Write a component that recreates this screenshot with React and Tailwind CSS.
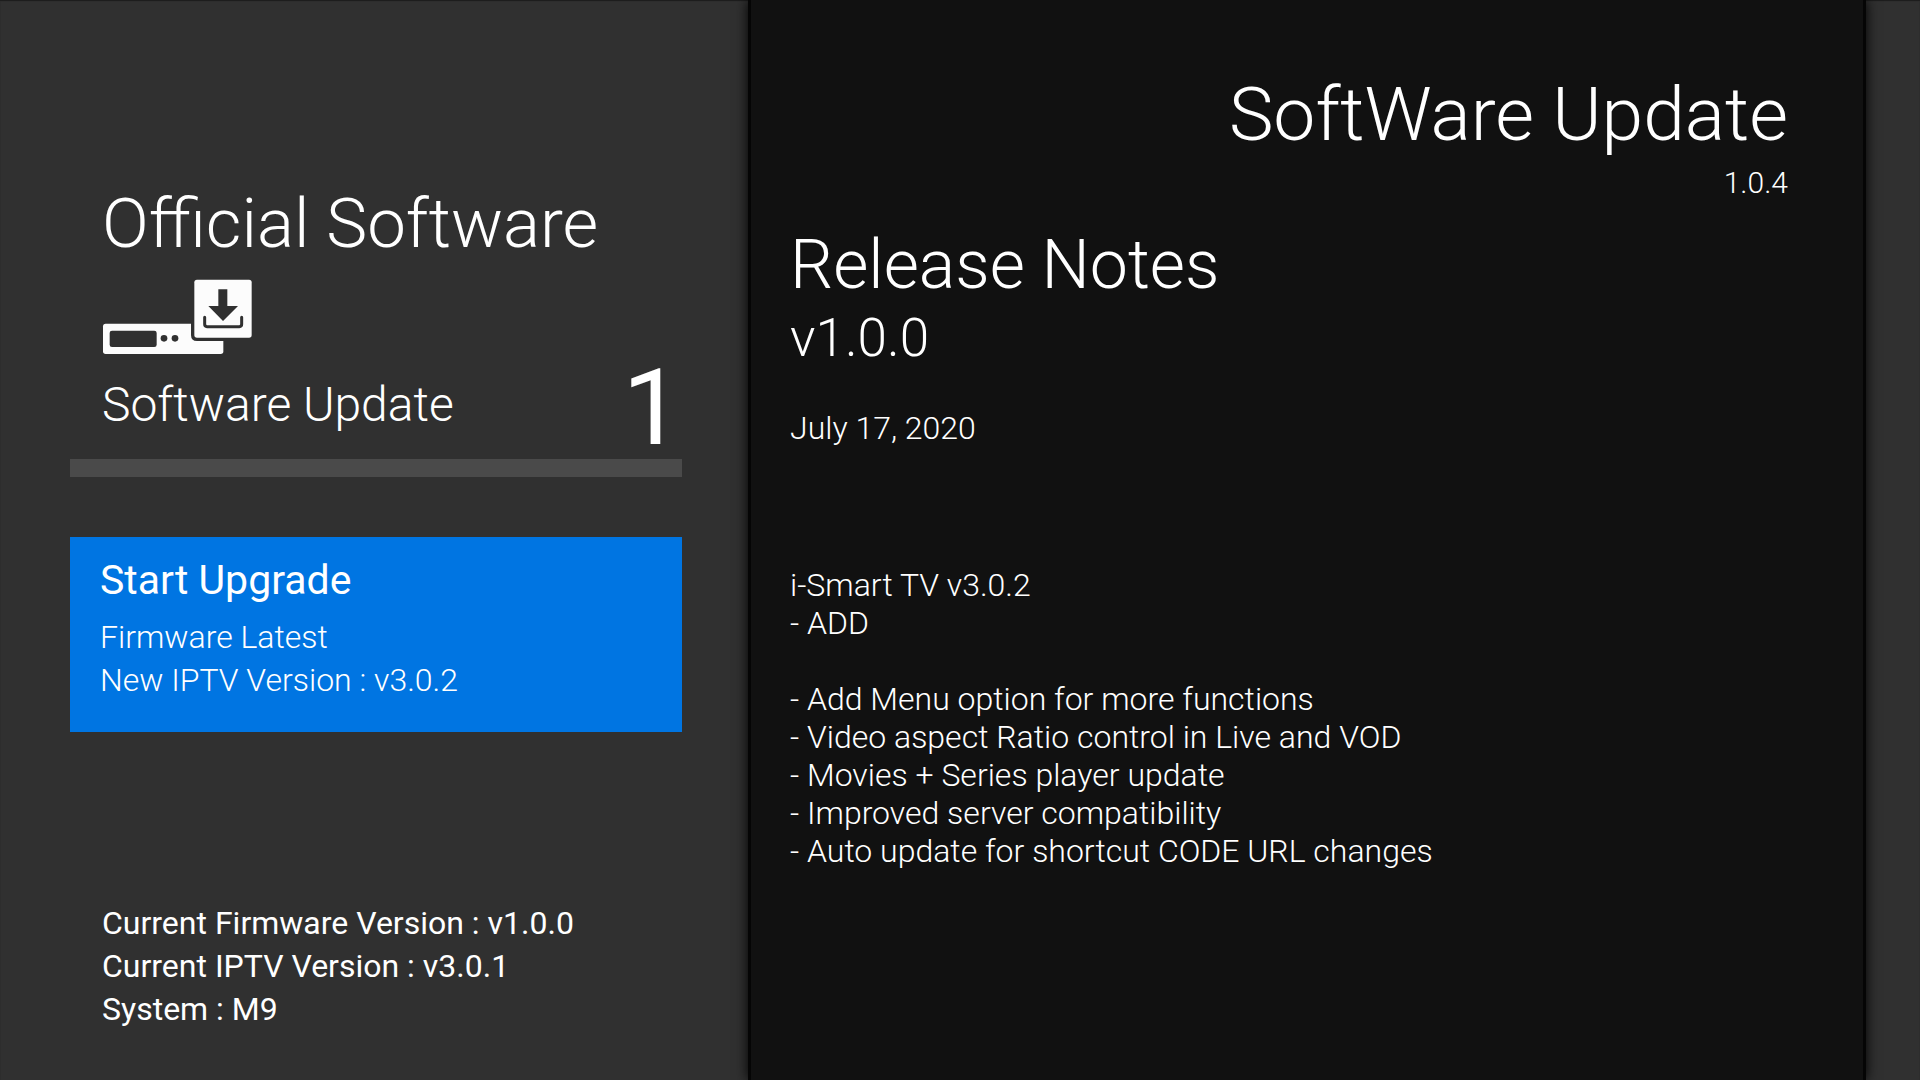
function DeviceIcon() {
    return (
        <svg className="h-[75px] w-[150px]" viewBox="67 56 450 225" aria-hidden="true">
            <rect x="70" y="190" width="361" height="91" rx="8" fill="#fcfcfc" />
            <rect x="90" y="211" width="141" height="49" rx="7" fill="#303030" />
            <circle cx="253" cy="234" r="10" fill="#303030" />
            <circle cx="286" cy="234" r="10" fill="#303030" />
            <path d="M334 180H516V242H352Q334 242 334 224Z" fill="#303030" />
            <rect x="344" y="58" width="172" height="174" rx="8" fill="#fcfcfc" />
            <path d="M416 87H443V137H475L430 182L386 137H416Z" fill="#303030" />
            <path
                d="M375 171V192Q375 199 382 199H479Q486 199 486 192V171"
                fill="none"
                stroke="#303030"
                strokeWidth="9"
                strokeLinecap="round"
            />
        </svg>
    );
}

const changes = [
    'Add Menu option for more functions',
    'Video aspect Ratio control in Live and VOD',
    'Movies + Series player update',
    'Improved server compatibility',
    'Auto update for shortcut CODE URL changes',
];

function Sidebar() {
    return (
        <aside className="flex flex-col pr-[66px] pl-[70px]">
            <header className="pt-[183px] pl-8">
                <h1 className="text-[69px] leading-[82px] font-light">
                    Official Software
                </h1>
                <div className="pt-[14px]">
                    <DeviceIcon />
                </div>
            </header>
            <div className="flex h-[105px] items-start justify-between pl-8">
                <h2 className="pt-[23px] text-[48px] leading-[56px] font-light">
                    Software Update
                </h2>
                <span className="text-[106px] leading-[108px]">1</span>
            </div>
            <div className="h-[18px] bg-[#4a4a4a]" />

            <button
                type="button"
                className="mt-[60px] flex h-[195px] flex-col items-start bg-[#0075e2] pt-[19px] pl-[30px] text-left"
            >
                <span className="text-[41px] leading-[48px]">
                    Start Upgrade
                </span>
                <span className="pt-[12px] text-[32px] leading-[43px] font-light">
                    Firmware Latest
                    <br />
                    New IPTV Version : v3.0.2
                </span>
            </button>

            <div className="pt-[170px] pl-8 text-[32px] leading-[43px]">
                <p>Current Firmware Version : v1.0.0</p>
                <p>Current IPTV Version : v3.0.1</p>
                <p>System : M9</p>
            </div>
        </aside>
    );
}

function ReleaseNotes() {
    return (
        <main className="border-x-3 border-[#050505] bg-[#111111] pr-[75px] pl-[39px] font-light shadow-[0_0_12px_#000]">
            <header className="pt-[69px] text-right">
                <h2 className="text-[75px] leading-[90px]">SoftWare Update</h2>
                <p className="pt-[6px] text-[30px] leading-[36px]">1.0.4</p>
            </header>

            <section>
                <h3 className="pt-[23px] text-[68px] leading-[82px]">
                    Release Notes
                </h3>
                <p className="pt-px text-[53px] leading-[62px]">v1.0.0</p>
                <p className="pt-[40px] text-[32px] leading-[38px]">
                    July 17, 2020
                </p>

                <div className="pt-[119px] text-[32px] leading-[38px]">
                    <p>i-Smart TV v3.0.2</p>
                    <p>- ADD</p>
                    <ul className="pt-[38px]">
                        {changes.map((change) => (
                            <li key={change}>- {change}</li>
                        ))}
                    </ul>
                </div>
            </section>
        </main>
    );
}

export default function App() {
    return (
        <div className="grid min-h-screen grid-cols-[748fr_1118fr_54fr] bg-[#303030] font-[Roboto,sans-serif] text-white shadow-[inset_0_1px_1px_#1c1c1c]">
            <Sidebar />
            <ReleaseNotes />
        </div>
    );
}
